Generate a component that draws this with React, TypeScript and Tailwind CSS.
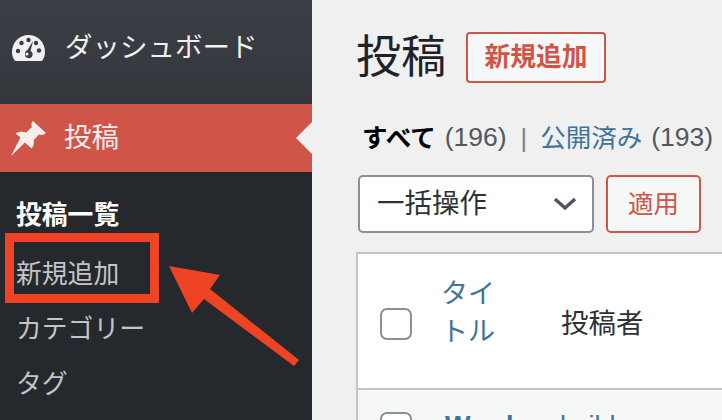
const font = { fontFamily: '"Liberation Sans", "Noto Sans CJK JP", sans-serif' };

function Gauge() {
  return (
    <svg width="33" height="27" viewBox="0 0 33 27" className="shrink-0">
      <path fillRule="evenodd" fill="#f0f0f1" d="M3 27 C0.5 23.5 0 21 0 18 C0 8 7.5 1 16.5 1 C25.5 1 33 8 33 18 C33 21 32.500 23.500 30 27 Z" />
      <circle cx="6" cy="17" r="2.2" fill="#3a3d43" />
      <circle cx="9.500" cy="9" r="2.200" fill="#3a3d43" />
      <circle cx="16.500" cy="6" r="2.200" fill="#3a3d43" />
      <circle cx="27" cy="16.500" r="2.200" fill="#3a3d43" />
      <circle cx="24" cy="9" r="2.200" fill="#3a3d43" />
      <path d="M21 7 L18.500 17 A3.800 3.800 0 1 1 13 20 A3.800 3.800 0 0 1 15.500 16 Z" fill="#3a3d43" />
      <circle cx="15" cy="20" r="1.500" fill="#f0f0f1" />
    </svg>
  );
}

function Pin() {
  return (
    <svg width="35" height="35" viewBox="0 0 35 35" className="shrink-0">
      <path fill="#f5eeec" d="M22 0 L35 12 C33 14 30 14.500 28 13.500 L22.500 19.500 C23.500 22 23 25 20.500 27.500 L14 21.500 L0 35 L9.500 16.500 L4.500 12.500 C8 10.500 11 10 15 11.500 L21 6 C20 4 20 2 22 0 Z" />
    </svg>
  );
}

export default function App() {
  return (
    <div className="relative flex h-[420px] w-[722px] overflow-hidden bg-[#f0f0f1]" style={font}>
      <aside className="flex w-[312px] shrink-0 flex-col bg-[#25282c]">
        <div className="flex h-[104px] items-center gap-[20px] bg-gradient-to-b from-[#3c3f46] to-[#33363b] pb-[9px] pl-[12px]">
          <Gauge />
          <span className="text-[27.500px] leading-none text-[#f0f0f1]">ダッシュボード</span>
        </div>
        <div className="relative flex h-[68px] items-center gap-[18px] bg-[#cf5549] pl-[11px]">
          <Pin />
          <span className="text-[27.500px] leading-none text-[#fbeeec]">投稿</span>
          <div className="absolute right-0 top-[18px] h-0 w-0 border-y-[16px] border-r-[16px] border-y-transparent border-r-[#f0f0f1]" />
        </div>
        <nav className="flex flex-col pl-[16px] pt-[31px] text-[25.800px] leading-none text-[#c3c4c7]">
          <span className="h-[59px] font-bold text-white">投稿一覧</span>
          <span className="h-[55px]">新規追加</span>
          <span className="h-[55px]">カテゴリー</span>
          <span>タグ</span>
        </nav>
      </aside>

      <main className="flex min-w-0 flex-1 flex-col pl-[44px]">
        <div className="flex items-center gap-[20px] pt-[32px]">
          <h1 className="text-[45px] font-normal leading-[51px] text-[#1d2327]">投稿</h1>
          <button className="flex h-[51px] w-[140px] items-center justify-center rounded-[4px] border-2 border-[#cf5549] bg-[#f6f7f7] text-[25.800px] font-bold text-[#cf5549]">
            新規追加
          </button>
        </div>
        <div className="mt-[35px] flex h-[44px] items-center whitespace-nowrap pl-[6px] text-[25.500px] text-[#50575e]">
          <span className="font-bold text-black">すべて</span>
          <span className="ml-[9px] text-[26.500px]">(196)</span>
          <span className="ml-[14px] text-[#787c82]">|</span>
          <span className="ml-[13px] text-[#3f7499]">公開済み</span>
          <span className="ml-[9px] text-[26.500px]">(193)</span>
        </div>
        <div className="mt-[17px] flex gap-[12px] pl-[2px]">
          <div className="flex h-[58px] w-[236px] items-center justify-between rounded-[5px] border-2 border-[#8c8f94] bg-white pl-[17px] pr-[15px]">
            <span className="text-[27.500px] leading-none text-[#2c3338]">一括操作</span>
            <svg width="24" height="14" viewBox="0 0 24 14">
              <path d="M2 2 L12 11 L22 2" fill="none" stroke="#50575e" strokeWidth="3.500" />
            </svg>
          </div>
          <button className="h-[58px] w-[95px] rounded-[5px] border-2 border-[#cf5549] bg-[#f6f7f7] text-[25.500px] text-[#cf5549]">
            適用
          </button>
        </div>
        <section className="mt-[19px] flex-1 border-l-2 border-t-2 border-[#c3c4c7] bg-white">
          <div className="flex h-[136px] items-center border-b-2 border-[#c3c4c7]">
            <div className="ml-[22px] mt-[6px] h-[32px] w-[32px] shrink-0 rounded-[7px] border-2 border-[#8c8f94] bg-white" />
            <div className="ml-[29px] mt-[-16px] w-[56px] shrink-0 text-[27px] leading-[38px] text-[#3f7499]">タイトル</div>
            <div className="ml-[64px] mt-[6px] text-[27.500px] leading-none text-[#2c3338]">投稿者</div>
          </div>
          <div className="flex h-[40px] items-start overflow-hidden bg-[#f6f7f7] pl-[22px] pt-[22px]">
            <div className="h-[32px] w-[32px] shrink-0 rounded-[7px] border-2 border-[#8c8f94] bg-white" />
            <div className="ml-[33px] mt-[1px] w-[115px] shrink-0 whitespace-nowrap text-[27px] font-bold leading-none text-[#3f7499]">Word</div>
            <div className="mt-[1px] whitespace-nowrap text-[27px] leading-none text-[#3f7499]">kaibloc</div>
          </div>
        </section>
      </main>

      <div className="pointer-events-none absolute left-[5px] top-[233px] h-[70px] w-[154px] border-[9px] border-[#ef4423]" />
      <svg className="pointer-events-none absolute left-[165px] top-[260px]" width="140" height="110" viewBox="0 0 140 110">
        <path fill="#ef4423" d="M4 6 L55 15 L45 29 L134 100 L129 106 L39 39 L27 53 Z" />
      </svg>
    </div>
  );
}
